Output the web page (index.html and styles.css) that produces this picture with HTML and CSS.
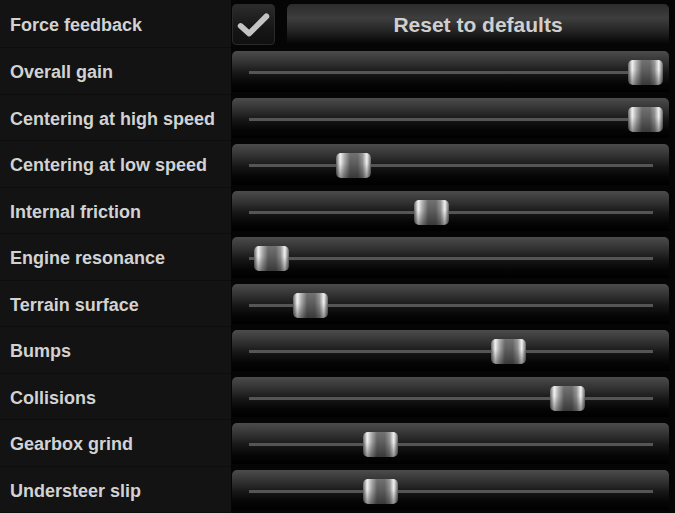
FILE: index.html
```html
<!DOCTYPE html>
<html lang="en">
<head>
    <meta charset="UTF-8">
    <meta name="viewport" content="width=device-width, initial-scale=1.0">
    <title>Force feedback</title>
    <link rel="stylesheet" href="styles.css">
</head>
<body>
    <div class="settings">
        <div class="row">
            <div class="label">Force feedback</div>
            <div class="control top">
                <div class="checkbox" role="checkbox" aria-checked="true" aria-label="Force feedback">
                    <svg width="43" height="43" viewBox="0 0 43 43">
                        <polyline points="8,23 17,31 35,13" fill="none" stroke="#c4c4c4" stroke-width="6" stroke-linecap="round" stroke-linejoin="round"/>
                    </svg>
                </div>
                <button class="reset">Reset to defaults</button>
            </div>
        </div>

        <div class="row">
            <div class="label">Overall gain</div>
            <div class="control"><div class="slider"><div class="track"></div><div class="thumb" style="left: 396px"></div></div></div>
        </div>
        <div class="row">
            <div class="label">Centering at high speed</div>
            <div class="control"><div class="slider"><div class="track"></div><div class="thumb" style="left: 396px"></div></div></div>
        </div>
        <div class="row">
            <div class="label">Centering at low speed</div>
            <div class="control"><div class="slider"><div class="track"></div><div class="thumb" style="left: 104px"></div></div></div>
        </div>
        <div class="row">
            <div class="label">Internal friction</div>
            <div class="control"><div class="slider"><div class="track"></div><div class="thumb" style="left: 182px"></div></div></div>
        </div>
        <div class="row">
            <div class="label">Engine resonance</div>
            <div class="control"><div class="slider"><div class="track"></div><div class="thumb" style="left: 22px"></div></div></div>
        </div>
        <div class="row">
            <div class="label">Terrain surface</div>
            <div class="control"><div class="slider"><div class="track"></div><div class="thumb" style="left: 61px"></div></div></div>
        </div>
        <div class="row">
            <div class="label">Bumps</div>
            <div class="control"><div class="slider"><div class="track"></div><div class="thumb" style="left: 259px"></div></div></div>
        </div>
        <div class="row">
            <div class="label">Collisions</div>
            <div class="control"><div class="slider"><div class="track"></div><div class="thumb" style="left: 318px"></div></div></div>
        </div>
        <div class="row">
            <div class="label">Gearbox grind</div>
            <div class="control"><div class="slider"><div class="track"></div><div class="thumb" style="left: 131px"></div></div></div>
        </div>
        <div class="row">
            <div class="label">Understeer slip</div>
            <div class="control"><div class="slider"><div class="track"></div><div class="thumb" style="left: 131px"></div></div></div>
        </div>
    </div>
</body>
</html>
```

FILE: styles.css
```css
* {
    margin: 0;
    padding: 0;
    box-sizing: border-box;
}

body {
    font-family: "Liberation Sans", Arial, sans-serif;
    background-color: #050505;
    width: 675px;
    height: 513px;
    overflow: hidden;
}

.settings {
    display: grid;
    grid-template-rows: repeat(11, 1fr);
    height: 513px;
}

.row {
    display: grid;
    grid-template-columns: 231px 1fr;
}

.label {
    display: flex;
    align-items: center;
    padding: 4px 0 0 10px;
    background-color: #131313;
    border-bottom: 1px solid #0d0d0d;
    color: #d2d2d2;
    font-size: 18px;
    font-weight: bold;
}

.control {
    padding: 3px 6px 3px 1px;
}

.control.top {
    display: flex;
    gap: 12px;
    padding: 4px 6px 3px 1px;
}

.checkbox {
    width: 43px;
    height: 41px;
    border-radius: 4px;
    background: linear-gradient(to bottom, #2c2c2c, #161616 60%, #101010);
    border: 1px solid #2a2a2a;
    display: flex;
    align-items: center;
    justify-content: center;
    flex-shrink: 0;
}

.reset {
    flex: 1;
    height: 40px;
    border: none;
    border-radius: 5px 5px 0 0;
    background: linear-gradient(to bottom, #2b2b2b 0%, #3e3e3e 35%, #262626 65%, #050505 100%);
    color: #cfcfcf;
    font-family: "Liberation Sans", Arial, sans-serif;
    font-size: 21px;
    font-weight: bold;
    padding-top: 2px;
    cursor: pointer;
}

.slider {
    position: relative;
    height: 100%;
    border-radius: 5px 5px 0 0;
    background: linear-gradient(to bottom, #4c4c4c 0%, #303030 30%, #161616 55%, #050505 80%, #000 100%);
}

.track {
    position: absolute;
    left: 17px;
    right: 16px;
    top: 20px;
    height: 3px;
    background-color: #555;
}

.thumb {
    position: absolute;
    top: 9px;
    width: 35px;
    height: 25px;
    border-radius: 5px;
    background:
        linear-gradient(to bottom, rgba(255, 255, 255, 0.12), rgba(0, 0, 0, 0) 40%, rgba(0, 0, 0, 0.4)),
        linear-gradient(to right, #5e5e5e 0%, #f2f2f2 12%, #a8a8a8 24%, #5e5e5e 40%, #5e5e5e 62%, #8e8e8e 76%, #f2f2f2 88%, #5e5e5e 100%);
}
```
